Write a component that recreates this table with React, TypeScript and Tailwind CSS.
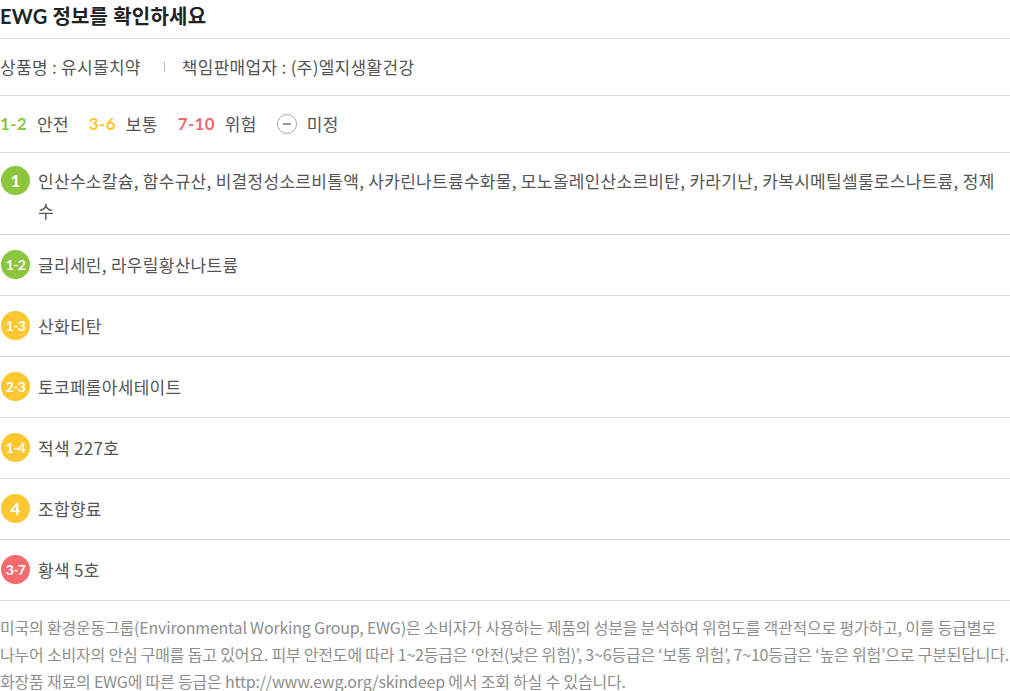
import { Fragment } from 'react';

type Grade = 'green' | 'yellow' | 'red';

const badgeBg: Record<Grade, string> = {
  green: 'bg-[#8cc63e]',
  yellow: 'bg-[#fdc731]',
  red: 'bg-[#f36b6e]',
};

const ingredients: { grade: string; tone: Grade; name: string }[] = [
  {
    grade: '1',
    tone: 'green',
    name: '인산수소칼슘, 함수규산, 비결정성소르비톨액, 사카린나트륨수화물, 모노올레인산소르비탄, 카라기난, 카복시메틸셀룰로스나트륨, 정제수',
  },
  { grade: '1-2', tone: 'green', name: '글리세린, 라우릴황산나트륨' },
  { grade: '1-3', tone: 'yellow', name: '산화티탄' },
  { grade: '2-3', tone: 'yellow', name: '토코페롤아세테이트' },
  { grade: '1-4', tone: 'yellow', name: '적색 227호' },
  { grade: '4', tone: 'yellow', name: '조합향료' },
  { grade: '3-7', tone: 'red', name: '황색 5호' },
];

const legend = [
  { range: '1-2', label: '안전', color: 'text-[#8cc63e]' },
  { range: '3-6', label: '보통', color: 'text-[#fdc731]' },
  { range: '7-10', label: '위험', color: 'text-[#f36b6e]' },
];

function Badge({ grade, tone }: { grade: string; tone: Grade }) {
  const single = grade.length === 1;
  return (
    <span
      className={`flex h-[29px] w-[29px] shrink-0 items-center justify-center rounded-full font-['Lato','Noto_Sans_CJK_KR',sans-serif] font-bold text-white ${badgeBg[tone]} ${
        single ? 'text-[17px]' : 'text-[14px] tracking-[-0.6px]'
      }`}
    >
      {grade}
    </span>
  );
}

export default function App() {
  return (
    <div className="w-[1010px] bg-white font-['Noto_Sans_CJK_KR','Noto_Sans',sans-serif] text-[17px] tracking-[0.3px] text-[#555]">
      {/* title */}
      <h2 className="h-[39px] border-b border-[#dcdcdc] font-['Lato','Noto_Sans_CJK_KR',sans-serif] text-[20px] font-bold leading-[32px] tracking-[0.2px] text-[#222]">
        EWG 정보를 확인하세요
      </h2>

      {/* product */}
      <div className="flex h-[57px] items-center border-b border-[#dcdcdc]">
        <span>상품명 : 유시몰치약</span>
        <span className="ml-[23px] mr-[17px] h-[10px] w-px bg-[#bbb]" />
        <span>책임판매업자 : (주)엘지생활건강</span>
      </div>

      {/* legend */}
      <div className="flex h-[57px] items-center border-b border-[#dcdcdc]">
        {legend.map((l) => (
          <Fragment key={l.range}>
            <span className={`font-['Lato','Noto_Sans_CJK_KR',sans-serif] text-[17px] font-bold ${l.color}`}>{l.range}</span>
            <span className="ml-[10px] mr-[20px]">{l.label}</span>
          </Fragment>
        ))}
        <span className="flex h-[20px] w-[20px] items-center justify-center rounded-full border-[1.5px] border-[#aaa]">
          <span className="h-[1.5px] w-[8px] bg-[#999]" />
        </span>
        <span className="ml-[10px]">미정</span>
      </div>

      {/* ingredients */}
      {ingredients.map((it, i) => (
        <div
          key={it.grade + it.name}
          className={`flex items-start gap-[8px] border-b border-[#dcdcdc] pl-[1px] pr-[6px] ${
            i === 0 ? 'pb-[8px] pt-[13px]' : 'py-[15px]'
          }`}
        >
          <Badge grade={it.grade} tone={it.tone} />
          <p className="leading-[30px]">{it.name}</p>
        </div>
      ))}

      {/* footnote */}
      <p className="pt-[13px] text-[16px] leading-[27px] tracking-[-0.2px] text-[#8e8e8e]">
        미국의 환경운동그룹(Environmental Working Group, EWG)은 소비자가 사용하는 제품의 성분을 분석하여 위험도를 객관적으로 평가하고, 이를 등급별로
        <br />
        나누어 소비자의 안심 구매를 돕고 있어요. 피부 안전도에 따라 1~2등급은 ‘안전(낮은 위험)’, 3~6등급은 ‘보통 위험’, 7~10등급은 ‘높은 위험’으로 구분된답니다.
        <br />
        화장품 재료의 EWG에 따른 등급은 http://www.ewg.org/skindeep 에서 조회 하실 수 있습니다.
      </p>
    </div>
  );
}
